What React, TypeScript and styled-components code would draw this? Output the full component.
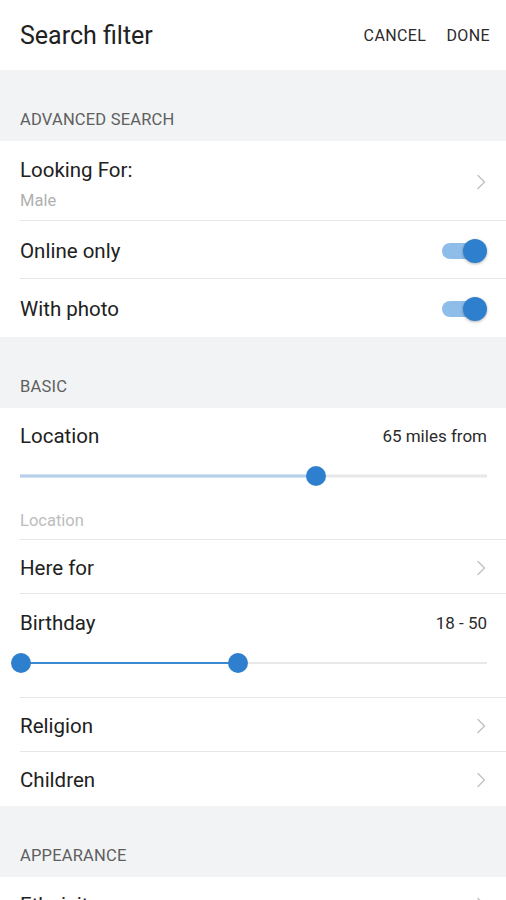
import styled, { createGlobalStyle } from 'styled-components';

const GlobalStyle = createGlobalStyle`
  html, body {
    margin: 0;
    padding: 0;
    background: #ffffff;
    font-family: Roboto, "Noto Sans", "Liberation Sans", sans-serif;
    color: #212121;
  }
`;

const Screen = styled.div`
  width: 506px;
  height: 900px;
  overflow: hidden;
  display: flex;
  flex-direction: column;
`;

const TopBar = styled.header`
  height: 70px;
  flex-shrink: 0;
  display: flex;
  align-items: center;
  justify-content: space-between;
  padding: 0 16px 0 20px;
  background: #ffffff;
`;

const Title = styled.h1`
  margin: 0;
  font-size: 25px;
  font-weight: 400;
  color: #212121;
`;

const Actions = styled.div`
  display: flex;
  gap: 20px;
`;

const ActionButton = styled.span`
  font-size: 16px;
  letter-spacing: 0.4px;
  color: #2b2b2b;
`;

const SectionHeader = styled.div`
  height: 71px;
  flex-shrink: 0;
  box-sizing: border-box;
  display: flex;
  align-items: flex-end;
  padding: 0 20px 11px;
  background: #f2f3f4;
  font-size: 16.5px;
  line-height: 20px;
  letter-spacing: 0.2px;
  color: #5f5f5f;
`;

const Section = styled.section`
  background: #ffffff;
  display: flex;
  flex-direction: column;
`;

const Row = styled.div<{ $height: number; $last?: boolean }>`
  height: ${(p) => p.$height}px;
  flex-shrink: 0;
  box-sizing: border-box;
  margin-left: 20px;
  padding: 2px 20px 0 0;
  display: flex;
  align-items: center;
  justify-content: space-between;
  border-bottom: ${(p) => (p.$last ? 'none' : '1px solid #e7e7e7')};
`;

const Block = styled.div<{ $height: number }>`
  height: ${(p) => p.$height}px;
  flex-shrink: 0;
  box-sizing: border-box;
  margin-left: 20px;
  padding-right: 19px;
  display: flex;
  flex-direction: column;
  border-bottom: 1px solid #e7e7e7;
`;

const Label = styled.span`
  font-size: 20.5px;
  line-height: 24px;
  color: #212121;
`;

const SubText = styled.span`
  font-size: 16.5px;
  line-height: 20px;
  color: #b0b0b0;
`;

const Stack = styled.div`
  display: flex;
  flex-direction: column;
  gap: 9px;
  padding-top: 5px;
`;

const BlockHead = styled.div<{ $top: number }>`
  display: flex;
  justify-content: space-between;
  align-items: center;
  padding-top: ${(p) => p.$top}px;
`;

const Value = styled.span`
  font-size: 17px;
  color: #2b2b2b;
`;

const TrackArea = styled.div<{ $top: number }>`
  position: relative;
  height: 20px;
  margin-top: ${(p) => p.$top}px;
`;

const Rail = styled.div<{ $thick: number }>`
  position: absolute;
  left: 0;
  right: 0;
  top: 50%;
  height: ${(p) => p.$thick}px;
  transform: translateY(-50%);
  background: #e8e8e8;
`;

const Fill = styled.div<{ $thick: number; $color: string }>`
  position: absolute;
  top: 50%;
  height: ${(p) => p.$thick}px;
  transform: translateY(-50%);
  background: ${(p) => p.$color};
`;

const Thumb = styled.div`
  position: absolute;
  top: 0;
  width: 20px;
  height: 20px;
  margin-left: -10px;
  border-radius: 50%;
  background: #2e80cf;
`;

const Placeholder = styled(SubText)`
  margin-top: 25px;
  color: #bdbdbd;
`;

const Toggle = styled.div`
  position: relative;
  width: 45px;
  height: 24px;
  margin-right: -1px;
`;

const ToggleTrack = styled.div`
  position: absolute;
  left: 0;
  top: 4px;
  width: 38px;
  height: 16px;
  border-radius: 8px;
  background: #8dbde8;
`;

const ToggleThumb = styled.div`
  position: absolute;
  right: 0;
  top: 0;
  width: 24px;
  height: 24px;
  border-radius: 50%;
  background: #2e80cf;
  box-shadow: 0 1px 3px rgba(0, 0, 0, 0.3);
`;

const Chevron = () => (
  <svg width="10" height="16" viewBox="0 0 10 16" fill="none">
    <polyline
      points="2,1.5 8.5,8 2,14.5"
      stroke="#c4c4c4"
      strokeWidth="1.5"
      strokeLinecap="round"
      strokeLinejoin="round"
    />
  </svg>
);

function Switch() {
  return (
    <Toggle>
      <ToggleTrack />
      <ToggleThumb />
    </Toggle>
  );
}

type RangeProps = { from: number; to: number; top: number; thick: number; color: string; showStart?: boolean };

// positions are percentages of the track width
function Slider({ from, to, top, thick, color, showStart }: RangeProps) {
  return (
    <TrackArea $top={top}>
      <Rail $thick={thick} />
      <Fill $thick={thick} $color={color} style={{ left: `${from}%`, width: `${to - from}%` }} />
      {showStart && <Thumb style={{ left: `${from}%` }} />}
      <Thumb style={{ left: `${to}%` }} />
    </TrackArea>
  );
}

export default function App() {
  return (
    <Screen>
      <GlobalStyle />
      <TopBar>
        <Title>Search filter</Title>
        <Actions>
          <ActionButton>CANCEL</ActionButton>
          <ActionButton>DONE</ActionButton>
        </Actions>
      </TopBar>

      <SectionHeader>ADVANCED SEARCH</SectionHeader>
      <Section>
        <Row $height={80}>
          <Stack>
            <Label>Looking For:</Label>
            <SubText>Male</SubText>
          </Stack>
          <Chevron />
        </Row>
        <Row $height={58}>
          <Label>Online only</Label>
          <Switch />
        </Row>
        <Row $height={58} $last>
          <Label>With photo</Label>
          <Switch />
        </Row>
      </Section>

      <SectionHeader>BASIC</SectionHeader>
      <Section>
        <Block $height={132}>
          <BlockHead $top={16}>
            <Label>Location</Label>
            <Value>65 miles from</Value>
          </BlockHead>
          <Slider from={0} to={63.4} top={18} thick={3} color="#b6d1eb" />
          <Placeholder>Location</Placeholder>
        </Block>
        <Row $height={54}>
          <Label>Here for</Label>
          <Chevron />
        </Row>
        <Block $height={104}>
          <BlockHead $top={17}>
            <Label>Birthday</Label>
            <Value>18 - 50</Value>
          </BlockHead>
          <Slider from={0.2} to={46.7} top={18} thick={2} color="#3b89d0" showStart />
        </Block>
        <Row $height={54}>
          <Label>Religion</Label>
          <Chevron />
        </Row>
        <Row $height={54} $last>
          <Label>Children</Label>
          <Chevron />
        </Row>
      </Section>

      <SectionHeader>APPEARANCE</SectionHeader>
      <Section>
        <Row $height={54} $last>
          <Label>Ethnicity</Label>
          <Chevron />
        </Row>
      </Section>
    </Screen>
  );
}
